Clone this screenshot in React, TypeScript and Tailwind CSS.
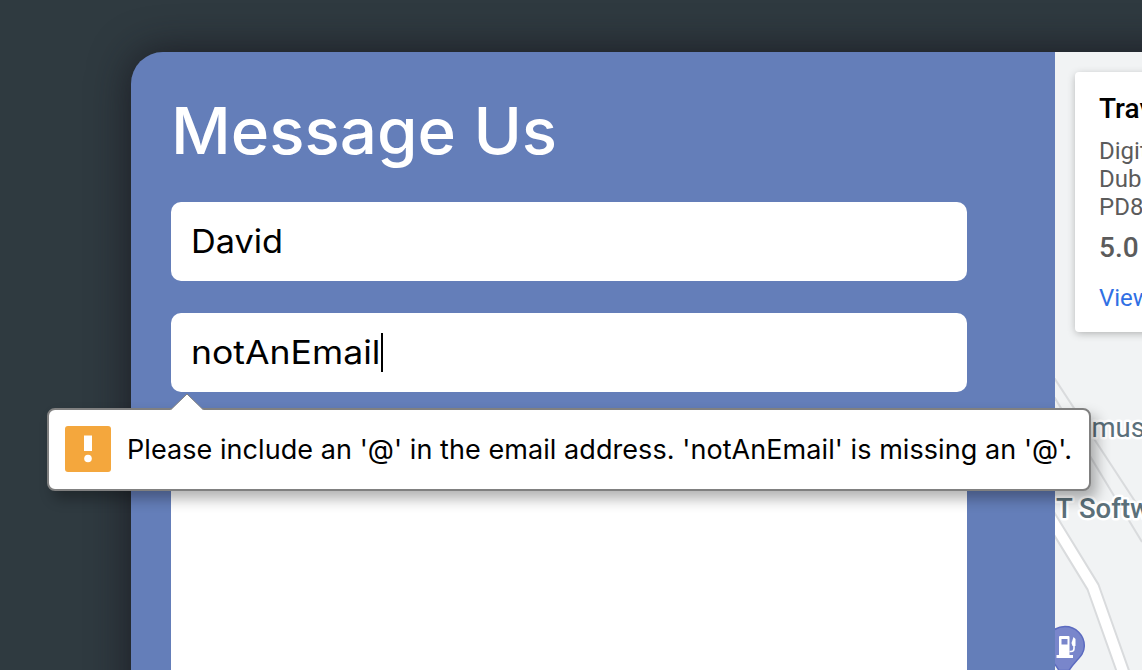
const field =
  "flex h-[79px] items-center rounded-[10px] bg-white pt-[1px] pl-[20px] text-[32.5px] text-black";

function MapArt() {
  return (
    <svg className="absolute inset-0" width="87" height="618" viewBox="0 0 87 618">
      <g fill="none" stroke="#d9dbdd" strokeWidth="2">
        <path d="M-2 324L87 460" />
        <path d="M-2 343L87 490" />
      </g>
      <path d="M-8 460L38 535L71 628" fill="none" stroke="#d9dbdd" strokeWidth="14" strokeLinejoin="round" />
      <path d="M-8 460L38 535L71 628" fill="none" stroke="#fff" strokeWidth="10" strokeLinejoin="round" />
      <g
        fill="#5b707a"
        stroke="#fff"
        strokeWidth="5"
        strokeLinejoin="round"
        fontFamily="Roboto, sans-serif"
        fontSize="27.500"
        style={{ paintOrder: "stroke" }}
      >
        <text x="36.500" y="384.500">mus</text>
        <text x="1" y="465.500" fontWeight="500">T Softw</text>
      </g>
      <path
        d="M10 574.500a19.300 19.300 0 0 1 19.300 19.500c0 10-9 14-15.300 24.500H4c-6-10.500-13.300-14.500-13.300-24.500a19.300 19.300 0 0 1 19.300-19.500z"
        fill="#7986cb"
        stroke="#5c6bc0"
        strokeWidth="1.500"
      />
      <path
        fillRule="evenodd"
        fill="#fff"
        d="M5 584h8.500a1 1 0 0 1 1 1v18H18v3H1.500v-3H4v-18a1 1 0 0 1 1-1zM6.500 587v5.500h6V587z"
      />
      <path d="M14.500 599.500h1.500q3 0 3-3v-6" fill="none" stroke="#fff" strokeWidth="1.600" />
      <path d="M18.500 585l2 2v7h-3l-1-3z" fill="#fff" />
    </svg>
  );
}

export default function App() {
  return (
    <div className="relative h-[670px] w-[1142px] overflow-hidden bg-[#2f3a40] pt-[52px] pl-[131px] font-['Inter',sans-serif]">
      <main className="flex h-[720px] w-[1300px] overflow-hidden rounded-tl-[32px] shadow-[0_0_40px_rgba(20,18,26,0.75)]">
        <section className="flex w-[924px] shrink-0 flex-col bg-[#647eb9] px-[40px] pt-[40px]">
          <h1 className="h-[78px] origin-left scale-x-[1.023] text-[64px] leading-[78px] font-medium whitespace-nowrap text-white">
            Message Us
          </h1>
          <form className="mt-[32px] flex w-[796px] flex-col gap-[32px]">
            <div className={field}>
              <span className="origin-left scale-x-[1.055]">David</span>
            </div>
            <div className={field}>
              <span className="mr-[17px] origin-left scale-x-[1.095]">notAnEmail</span>
              <span className="-mt-[1px] h-[39px] w-[2px] bg-black" />
            </div>
            <div className="h-[400px] rounded-[10px] bg-white" />
          </form>
        </section>
        <aside className="relative flex-1 bg-[#f1f3f4] pt-[20px] pl-[20px]">
          <MapArt />
          <div className="relative h-[260px] w-[400px] rounded-[4px] bg-white pt-[23px] pl-[24px] font-['Roboto',sans-serif] text-[24px] leading-[28px] text-[#5b5b5b] shadow-[0_2px_8px_-1px_rgba(0,0,0,0.3)]">
            <h2 className="text-[28px] font-medium text-black">Travel</h2>
            <p className="mt-[14px]">
              Digital
              <br />
              Dublin
              <br />
              PD8
            </p>
            <p className="mt-[13px] text-[28px] font-medium">5.0</p>
            <p className="mt-[22px] text-[#3070e4]">View</p>
          </div>
        </aside>
      </main>

      <div className="absolute top-[408px] left-[47px] flex h-[83px] w-[1044px] items-center rounded-[8px] border-2 border-[#808080] bg-white pb-[2px] pl-[16px] shadow-[6px_8px_14px_rgba(0,0,0,0.3)]">
        <svg className="absolute -top-[17px] left-[121px]" width="34" height="19" viewBox="0 0 34 19">
          <path d="M0 17.500L17 1L34 17.500V19H0z" fill="#fff" />
          <path d="M1 16.500L17 1L33 16.500" fill="none" stroke="#808080" />
        </svg>
        <svg className="shrink-0" width="46" height="46" viewBox="0 0 46 46">
          <rect width="46" height="46" rx="3" fill="#f4a73d" />
          <path d="M19 9.500h8v15.500h-8z" fill="#fff" />
          <circle cx="23" cy="32.500" r="3.800" fill="#fff" />
        </svg>
        <p className="ml-[16px] pt-[3px] text-[27px] tracking-[0.065px] whitespace-nowrap text-black">
          Please include an '@' in the email address. 'notAnEmail' is missing an '@'.
        </p>
      </div>
    </div>
  );
}
